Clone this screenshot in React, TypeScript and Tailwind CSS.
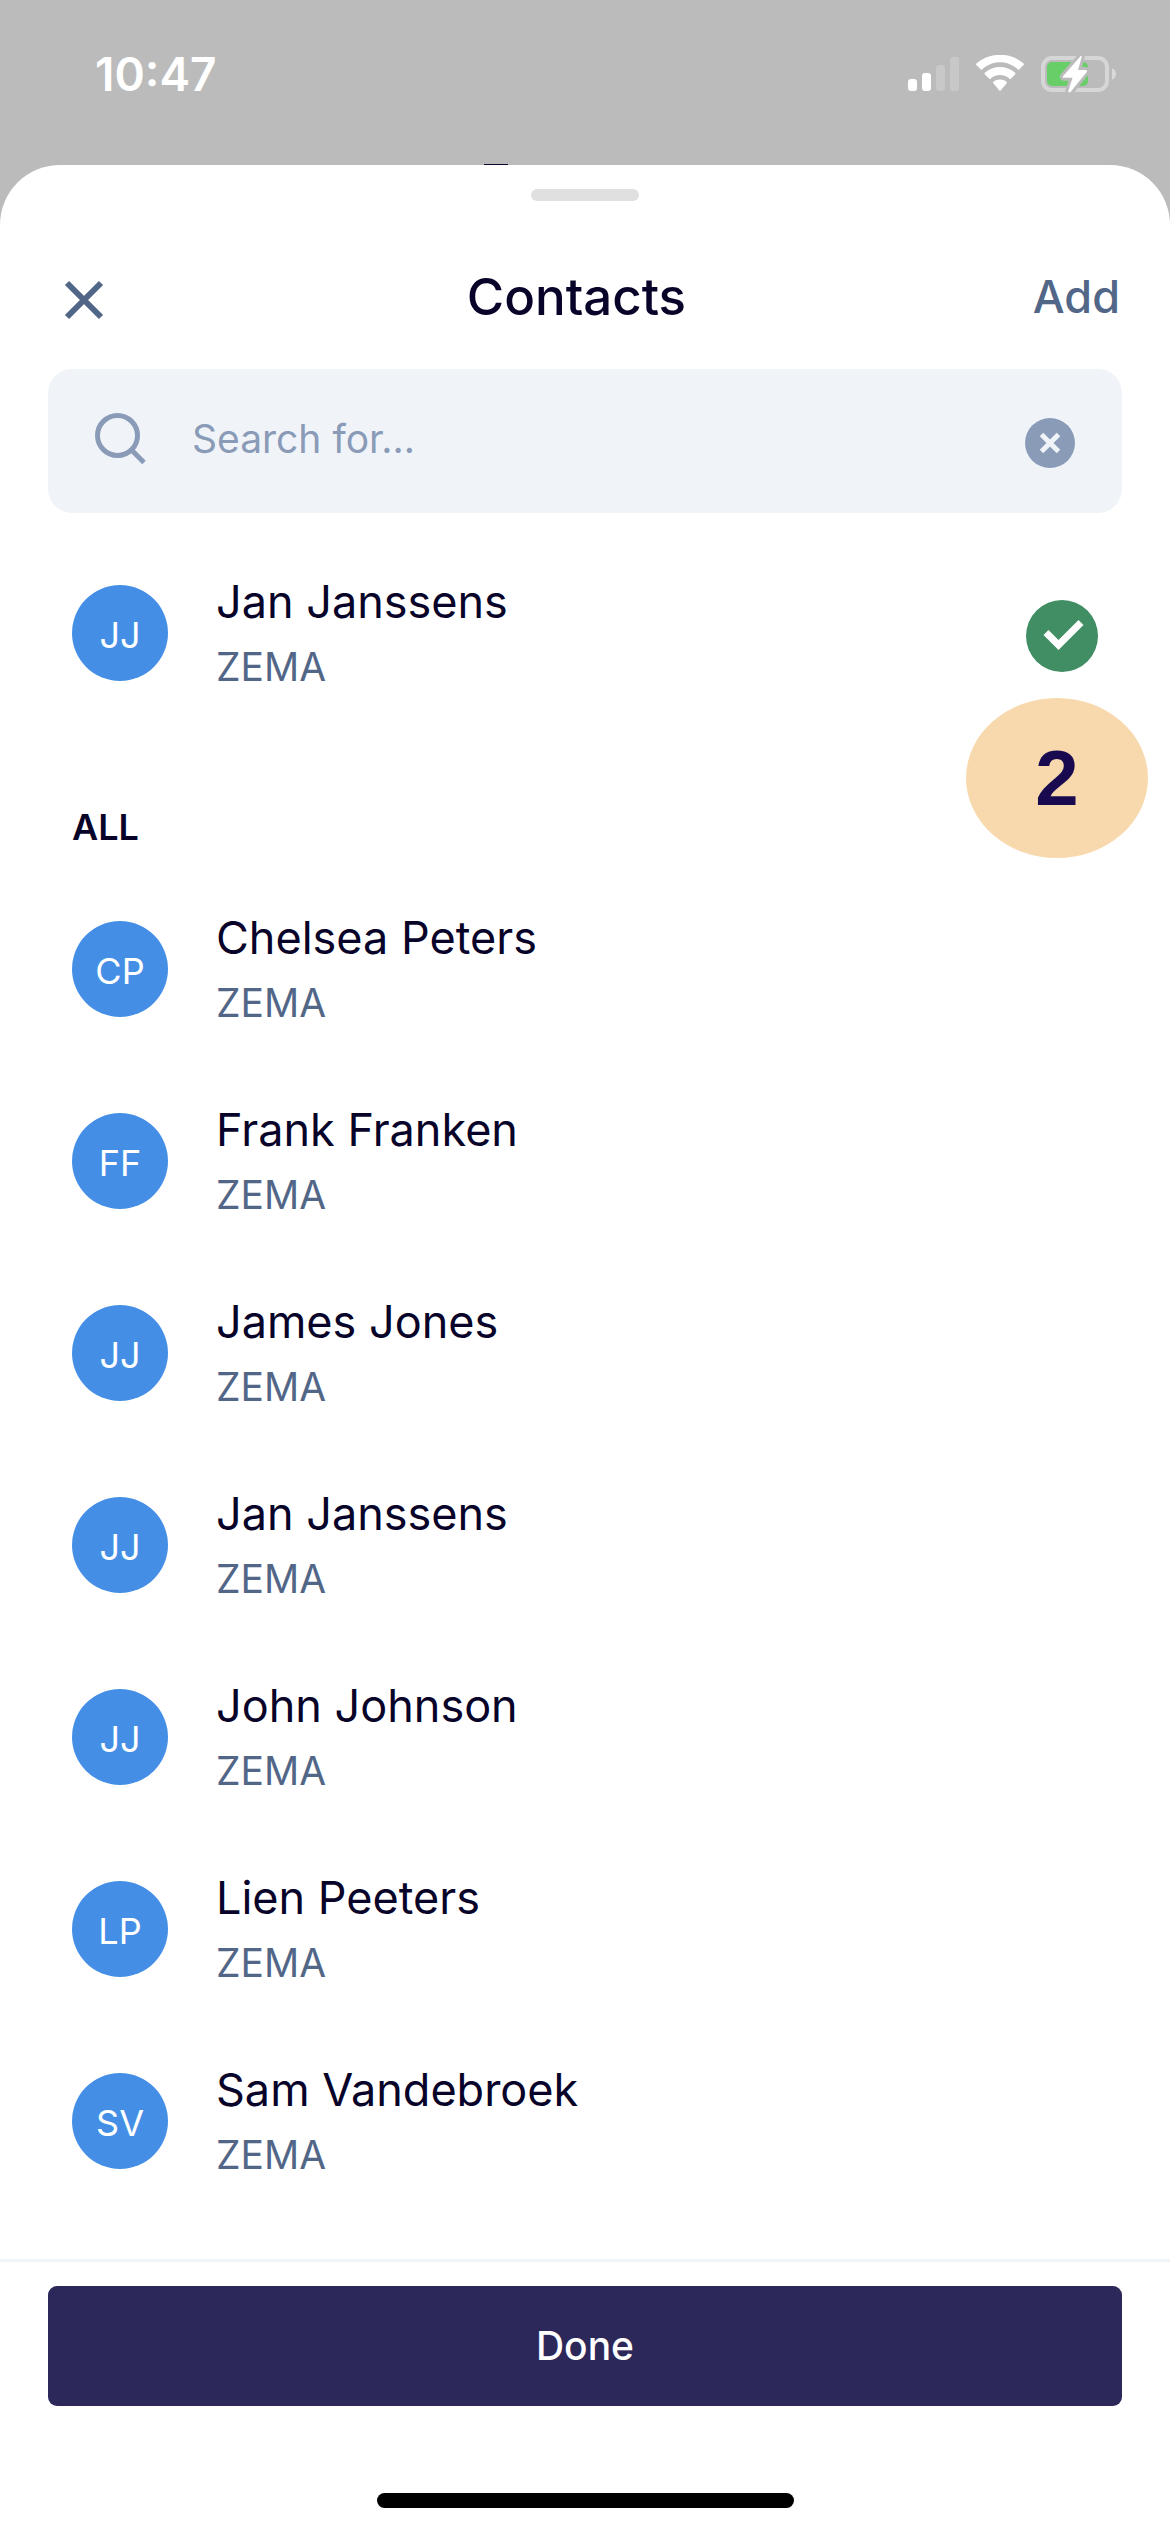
import { useState } from 'react';

interface Contact {
  id: number;
  name: string;
  initials: string;
  company: string;
}

const selected: Contact = { id: 0, name: 'Jan Janssens', initials: 'JJ', company: 'ZEMA' };

const contacts: Contact[] = [
  { id: 1, name: 'Chelsea Peters', initials: 'CP', company: 'ZEMA' },
  { id: 2, name: 'Frank Franken', initials: 'FF', company: 'ZEMA' },
  { id: 3, name: 'James Jones', initials: 'JJ', company: 'ZEMA' },
  { id: 4, name: 'Jan Janssens', initials: 'JJ', company: 'ZEMA' },
  { id: 5, name: 'John Johnson', initials: 'JJ', company: 'ZEMA' },
  { id: 6, name: 'Lien Peeters', initials: 'LP', company: 'ZEMA' },
  { id: 7, name: 'Sam Vandebroek', initials: 'SV', company: 'ZEMA' },
];

function SignalIcon() {
  return (
    <svg width="51" height="38" viewBox="0 0 51 38" fill="#fff" aria-hidden="true">
      <rect x="0" y="24" width="9" height="12" rx="3" />
      <rect x="14" y="18" width="9" height="18" rx="3" />
      <rect x="28" y="10" width="9" height="26" rx="3" opacity="0.2" />
      <rect x="42" y="2" width="9" height="34" rx="3" opacity="0.2" />
    </svg>
  );
}

function WifiIcon() {
  return (
    <svg width="50" height="38" viewBox="0 0 50 38" fill="#fff" aria-hidden="true">
      <path d="M25 7.3c6.700 0 13.100 2.600 17.900 7.200.4.400.9.400 1.300 0l4.400-4.400c.4-.4.4-1.100 0-1.500C35.400-3.200 14.600-3.200 1.400 8.600c-.4.400-.4 1.100 0 1.500l4.400 4.400c.4.400.9.400 1.300 0C11.900 9.900 18.300 7.300 25 7.300z" />
      <path d="M25 20c3.500 0 6.900 1.300 9.500 3.700.4.400.9.400 1.300 0l4.400-4.400c.4-.4.4-1.100 0-1.500-8.600-7.800-21.800-7.800-30.400 0-.4.400-.4 1.100 0 1.500l4.400 4.400c.4.400.9.400 1.300 0C18.100 21.300 21.500 20 25 20z" />
      <path d="M31.700 28.300c.4-.4.4-1.100 0-1.500-3.900-3.200-9.500-3.200-13.400 0-.4.400-.4 1.100 0 1.500l6.100 7.300c.3.400.9.400 1.200 0z" />
    </svg>
  );
}

function BatteryIcon() {
  return (
    <svg width="76" height="40" viewBox="0 0 76 40" aria-hidden="true">
      <rect x="2" y="4" width="64" height="32" rx="9" fill="none" stroke="#fff" strokeOpacity="0.4" strokeWidth="4" />
      <path d="M71 14.500c2.600.7 4 3 4 5.500s-1.400 4.800-4 5.500z" fill="#fff" fillOpacity="0.450" />
      <rect x="6" y="8" width="41" height="24" rx="5" fill="#68ce67" />
      <path
        d="M39.300 2.400 22.200 22c-.6.800-.2 1.800.8 1.800h8.600L27.400 36.600c-.5 1.600 1.100 2.600 2.200 1.300L45.700 17.900c.7-.8.2-1.800-.8-1.800h-7.800L40.600 3.600c.5-1.700-.4-2.100-1.300-1.200z"
        fill="#fff"
        stroke="#bbbbbb"
        strokeWidth="6"
        strokeLinejoin="round"
        paintOrder="stroke"
      />
    </svg>
  );
}

function StatusBar() {
  return (
    <div className="relative flex h-[165px] items-start justify-between pr-[53px] pl-[95px]">
      <span className="mt-11 text-[46px] leading-[60px] font-semibold text-white">10:47</span>
      <div className="mt-[54px] flex items-center gap-4">
        <SignalIcon />
        <WifiIcon />
        <BatteryIcon />
      </div>
      {/* top edge of the page title hidden behind the sheet */}
      <span className="absolute bottom-0 left-[484px] h-px w-6 bg-[#080329]" />
    </div>
  );
}

function CheckBadge() {
  return (
    <svg className="mt-1.5 shrink-0" width="72" height="72" viewBox="0 0 72 72" aria-label="Selected" role="img">
      <circle cx="36" cy="36" r="36" fill="#418e64" />
      <path d="M20 32.500 32.500 45 55 22.500" fill="none" stroke="#fff" strokeWidth="7" />
    </svg>
  );
}

function ContactRow({ contact, checked = false }: { contact: Contact; checked?: boolean }) {
  return (
    <button type="button" aria-pressed={checked} className="flex h-48 w-full items-center px-[72px] text-left">
      <span className="flex size-24 shrink-0 items-center justify-center rounded-full bg-[#448fe5] pt-1 text-[36px] text-white">
        {contact.initials}
      </span>
      <span className="ml-12 flex min-w-0 flex-1 flex-col pt-0.5 leading-[65px]">
        <span className="truncate text-[45px] text-[#080329]">{contact.name}</span>
        <span className="truncate text-[39px] text-[#526788]">{contact.company}</span>
      </span>
      {checked && <CheckBadge />}
    </button>
  );
}

export default function App() {
  const [query, setQuery] = useState('');

  return (
    <div className="flex min-h-screen flex-col bg-[#bbbbbb] font-['Inter',sans-serif]">
      <StatusBar />

      <main className="flex flex-1 flex-col rounded-t-[60px] bg-white pt-6">
        <div className="mx-auto h-3 w-[108px] rounded-full bg-[#e0e0e0]" />

        <header className="mt-6 flex h-36 items-center justify-between pr-[50px] pl-12">
          <button type="button" aria-label="Close">
            <svg width="72" height="72" viewBox="0 0 72 72" fill="none" stroke="#526788" strokeWidth="6">
              <path d="M19 22 53 56M53 22 19 56" />
            </svg>
          </button>
          <h1 className="text-[51px] font-medium text-[#080329]">Contacts</h1>
          <button type="button" className="text-[45px] font-medium text-[#526788]">
            Add
          </button>
        </header>

        <div className="mx-12 flex h-36 items-center rounded-3xl bg-[#f0f4f9] px-9">
          <svg className="shrink-0" width="72" height="72" viewBox="0 0 72 72" fill="none" stroke="#8a9bb8" strokeWidth="5">
            <circle cx="33.500" cy="30.500" r="20" />
            <path d="M47 44.500 60 57.500" />
          </svg>
          <input
            type="text"
            aria-label="Search contacts"
            placeholder="Search for..."
            value={query}
            onChange={(e) => setQuery(e.target.value)}
            className="mx-9 h-full min-w-0 flex-1 bg-transparent pb-1.5 text-[39px] text-[#080329] outline-none placeholder:text-[#8a9bb8]"
          />
          <button type="button" aria-label="Clear search" onClick={() => setQuery('')}>
            <svg width="72" height="72" viewBox="0 0 72 72">
              <circle cx="36" cy="38" r="25" fill="#8a9bb8" />
              <path d="M27.500 29.500 44.500 46.500M44.500 29.500 27.500 46.500" stroke="#f0f4f9" strokeWidth="5" />
            </svg>
          </button>
        </div>

        <section className="relative mt-6">
          <ContactRow contact={selected} checked />
          <span className="absolute top-[161px] right-[22px] flex h-40 w-[182px] items-center justify-center rounded-[50%] bg-[#f8d9ae] font-['Liberation_Sans',sans-serif] text-[78px] font-bold text-[#190a50]">
            2
          </span>
        </section>

        <section>
          <h2 className="px-[72px] pt-[52px] text-[36px] leading-[92px] font-semibold text-[#080329]">ALL</h2>
          <ul className="flex flex-col">
            {contacts.map((contact) => (
              <li key={contact.id}>
                <ContactRow contact={contact} />
              </li>
            ))}
          </ul>
        </section>

        <footer className="mt-auto flex flex-col border-t-[3px] border-[#f0f4f9] px-12 pt-6 pb-6">
          <button type="button" className="h-[120px] rounded-[9px] bg-[#2d285a] text-[39px] font-medium text-white">
            Done
          </button>
          <div className="mx-auto mt-[87px] h-[15px] w-[417px] rounded-full bg-black" />
        </footer>
      </main>
    </div>
  );
}
